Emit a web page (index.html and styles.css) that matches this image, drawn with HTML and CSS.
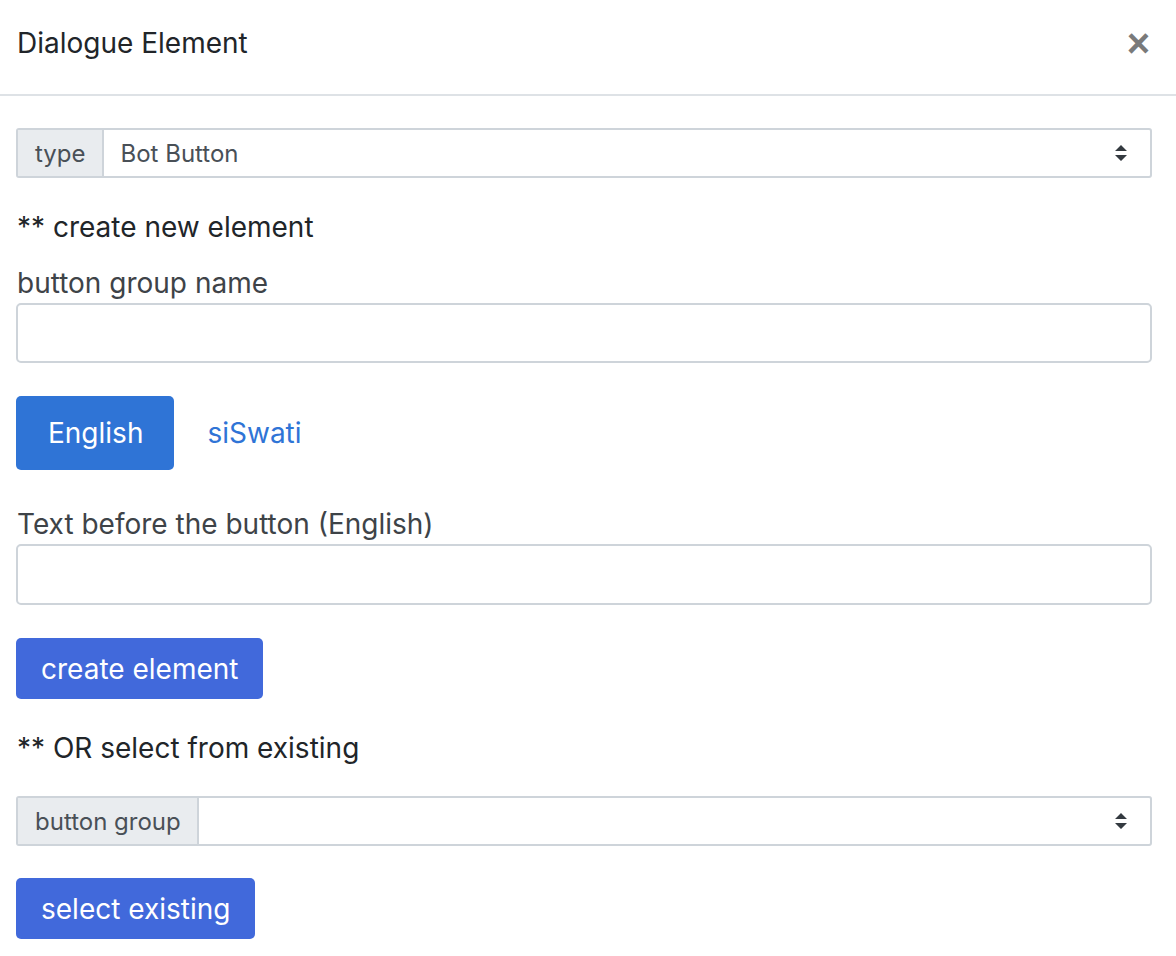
FILE: index.html
```html
<!DOCTYPE html>
<html>
<head>
<meta charset="utf-8">
<link rel="stylesheet" href="styles.css">
</head>
<body>
<div class="modal">
  <div class="modal-header">
    <h5 class="modal-title">Dialogue Element</h5>
    <button class="close" aria-label="Close">&times;</button>
  </div>
  <div class="modal-body">
    <div class="input-group">
      <span class="addon">type</span>
      <div class="select"><span>Bot Button</span><svg class="caret" width="14" height="20" viewBox="0 0 14 20"><path d="M7 2 L13 8 H1 Z M7 18 L13 12 H1 Z" fill="#343a40"/></svg></div>
    </div>
    <p class="section">** create new element</p>
    <label class="label">button group name</label>
    <div class="input"></div>
    <div class="tabs">
      <span class="tab active">English</span>
      <span class="tab">siSwati</span>
    </div>
    <label class="label label2">Text before the button (English)</label>
    <div class="input input2"></div>
    <button class="btn create">create element</button>
    <p class="section">** OR select from existing</p>
    <div class="input-group">
      <span class="addon">button group</span>
      <div class="select"><span></span><svg class="caret" width="14" height="20" viewBox="0 0 14 20"><path d="M7 2 L13 8 H1 Z M7 18 L13 12 H1 Z" fill="#343a40"/></svg></div>
    </div>
    <button class="btn select-btn">select existing</button>
  </div>
</div>
</body>
</html>
```
FILE: styles.css
```css
* { box-sizing: border-box; }
html, body { margin: 0; padding: 0; background: #fff; }
body {
  font-family: Inter, "Noto Sans", "Liberation Sans", sans-serif;
  color: #212529;
}
.modal { width: 1176px; }
.modal-header {
  height: 96px;
  border-bottom: 2px solid #dee2e6;
  display: flex;
  align-items: center;
  justify-content: space-between;
  padding: 0 17px 8px 17px;
}
.modal-title {
  margin: 0;
  font-size: 28px;
  line-height: 40px;
  font-weight: 400;
  color: #212529;
}
.close {
  border: 0;
  background: none;
  font-size: 40px;
  font-weight: 700;
  color: #7a7a7a;
  padding: 0;
  margin-right: 9px;
  line-height: 1;
  font-family: "Liberation Sans", sans-serif;
}
.modal-body {
  padding: 32px 24px 16px 16px;
  display: flex;
  flex-direction: column;
  align-items: flex-start;
}
.input-group {
  display: flex;
  width: 1136px;
  height: 50px;
  border: 2px solid #ced4da;
  border-radius: 3px;
}
.addon {
  background: #e9ecef;
  border-right: 2px solid #ced4da;
  display: flex;
  align-items: center;
  padding: 0 16px 0 17px;
  font-size: 24px;
  color: #495057;
}
.select {
  flex: 1;
  display: flex;
  align-items: center;
  justify-content: space-between;
  padding: 0 22px 0 17px;
  font-size: 24px;
  color: #495057;
}
.section {
  margin: 29px 0 0 1px;
  font-size: 28px;
  line-height: 40px;
  color: #212529;
}
.label {
  margin: 16px 0 0 1px;
  font-size: 28px;
  line-height: 40px;
  color: #3e4348;
}
.label2 { margin-top: 34px; }
.input {
  width: 1136px;
  height: 60px;
  border: 2px solid #ced4da;
  border-radius: 5px;
}
.input2 { height: 61px; }
.tabs {
  display: flex;
  margin-top: 33px;
}
.tab {
  height: 74px;
  display: flex;
  align-items: center;
  padding: 0 31px 0 33px;
  font-size: 28px;
  color: #2f74d6;
  border-radius: 5px;
}
.tab.active {
  background: #2f74d6;
  color: #fff;
  padding: 0 31px 0 32px;
}
.btn {
  border: 0;
  border-radius: 5px;
  background: #4169db;
  color: #fff;
  font-family: inherit;
  font-size: 28px;
  height: 61px;
  padding: 0 25px;
}
.create { margin-top: 33px; }
.section + .input-group { margin-top: 28px; }
.select-btn { margin-top: 32px; }
```
